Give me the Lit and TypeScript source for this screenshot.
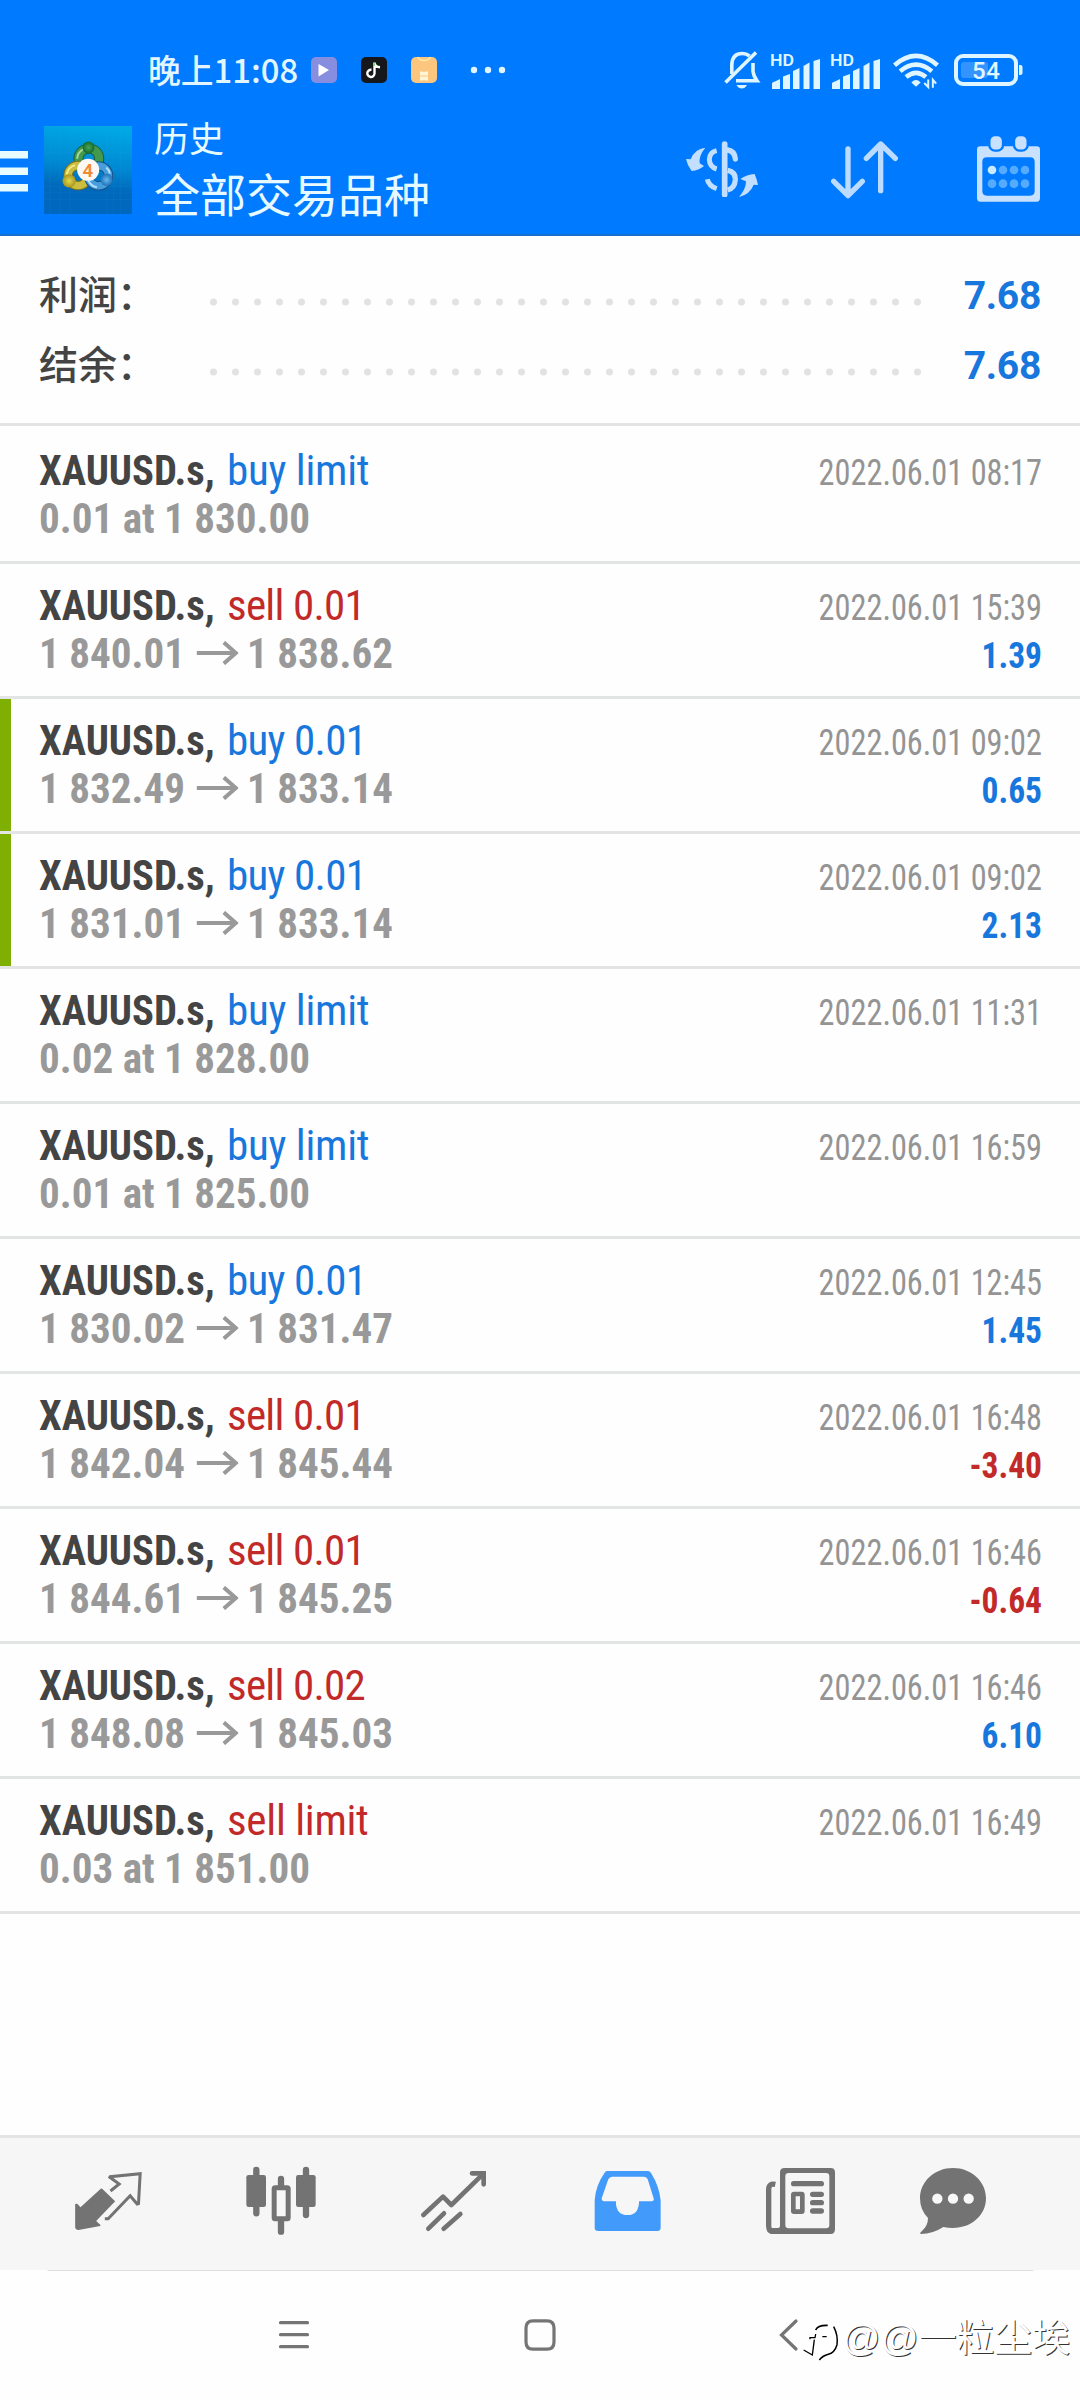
import { LitElement, html, svg, css } from "lit";
import { customElement, property } from "lit/decorators.js";
import { classMap } from "lit/directives/class-map.js";

interface Deal {
  side: "buy" | "sell";
  volume: string;
  from: string;
  to?: string;
  time: string;
  profit?: string;
  closed?: boolean;
}

const DEALS: Deal[] = [
  { side: "buy", volume: "limit", from: "0.01 at 1 830.00", time: "2022.06.01 08:17" },
  { side: "sell", volume: "0.01", from: "1 840.01", to: "1 838.62", time: "2022.06.01 15:39", profit: "1.39" },
  { side: "buy", volume: "0.01", from: "1 832.49", to: "1 833.14", time: "2022.06.01 09:02", profit: "0.65", closed: true },
  { side: "buy", volume: "0.01", from: "1 831.01", to: "1 833.14", time: "2022.06.01 09:02", profit: "2.13", closed: true },
  { side: "buy", volume: "limit", from: "0.02 at 1 828.00", time: "2022.06.01 11:31" },
  { side: "buy", volume: "limit", from: "0.01 at 1 825.00", time: "2022.06.01 16:59" },
  { side: "buy", volume: "0.01", from: "1 830.02", to: "1 831.47", time: "2022.06.01 12:45", profit: "1.45" },
  { side: "sell", volume: "0.01", from: "1 842.04", to: "1 845.44", time: "2022.06.01 16:48", profit: "-3.40" },
  { side: "sell", volume: "0.01", from: "1 844.61", to: "1 845.25", time: "2022.06.01 16:46", profit: "-0.64" },
  { side: "sell", volume: "0.02", from: "1 848.08", to: "1 845.03", time: "2022.06.01 16:46", profit: "6.10" },
  { side: "sell", volume: "limit", from: "0.03 at 1 851.00", time: "2022.06.01 16:49" },
];

@customElement("status-bar")
class StatusBar extends LitElement {
  static styles = css`
    :host { display: flex; align-items: center; height: 68px; padding: 36px 57px 0 148px; color: #e2f6ff; }
    svg { display: block; flex: none; overflow: visible; }
    .time { font: 500 32.800px/40px "Noto Sans CJK SC", sans-serif; width: 163px; white-space: nowrap; margin-top: -2px; }
    .apps { display: flex; gap: 24px; }
    .dots { margin-left: 33px; }
    .right { display: flex; align-items: center; margin-left: auto; }
    .sig { margin-left: 10px; }
    .wifi { margin-left: 12px; }
    .bat { margin-left: 14px; }
    text { font-family: "Roboto", sans-serif; }
  `;

  private signal() {
    return svg`
      <text x="0" y="14" font-size="17" font-weight="600" fill="#dff5ff" textLength="24" lengthAdjust="spacingAndGlyphs">HD</text>
      <g fill="#dff5ff">
        <path d="M2 37 V31.5 Q2 30 5 29.5 L10 27 V37 Z"/>
        <path d="M13 37 V24.5 L20 22 V37 Z"/>
        <path d="M23 37 V19 L29.5 16 V37 Z"/>
        <path d="M33.5 37 V14 L39.5 10.5 V37 Z"/>
        <path d="M43.5 37 V9 L50 7 V37 Z"/>
      </g>`;
  }

  render() {
    return html`
      <span class="time">晚上11:08</span>
      <div class="apps">
        <svg width="26" height="26" viewBox="0 0 26 26">
          <rect width="26" height="26" rx="5" fill="#878edf"/>
          <path d="M7.5 7 L18 13 L7.5 19.5 Z" fill="#fff"/>
        </svg>
        <svg width="26" height="26" viewBox="0 0 26 26">
          <rect width="26" height="26" rx="5" fill="#16171c"/>
          <path d="M13.5 5.5 V16.5 A3.6 3.6 0 1 1 10.5 12.8 M13.5 6 Q14.5 10 19 10.3" fill="none" stroke="#fff" stroke-width="2.4"/>
          <path d="M13.3 5.5 V9" stroke="#5fd05f" stroke-width="1"/>
        </svg>
        <svg width="26" height="26" viewBox="0 0 26 26">
          <rect width="26" height="26" rx="5" fill="#fcc67f"/>
          <path d="M7 0 Q8 3.5 13 3.5 Q18 3.5 19.5 0" fill="none" stroke="#ffe9a8" stroke-width="1.4"/>
          <path d="M9 14.5 h3 l1 1 l1 -1 h3 v4 h-8 Z M9 19.5 h8 v4 h-3 l-1 -1 l-1 1 h-3 Z" fill="#fff6d8"/>
        </svg>
      </div>
      <svg class="dots" width="36" height="8" viewBox="0 0 36 8" fill="#dff5ff">
        <circle cx="4" cy="4" r="3.2"/><circle cx="18" cy="4" r="3.2"/><circle cx="32" cy="4" r="3.2"/>
      </svg>
      <div class="right">
        <svg width="36" height="39" viewBox="0 0 36 39" fill="none" stroke="#dff5ff" stroke-width="3.6">
          <path d="M1.5 31.5 L32 1.5"/>
          <path d="M7.8 23 V14 Q8 2.500 18.500 2.500 Q22.500 2.500 25.500 5"/>
          <path d="M29 12 V20.500 Q29.500 25 33 29.800 H12"/>
          <path d="M12.500 34 H23 Q21 37.500 17.800 37.500 Q14.500 37.500 12.500 34 Z" fill="#dff5ff" stroke="none"/>
        </svg>
        <svg class="sig" width="50" height="37" viewBox="0 0 50 37">${this.signal()}</svg>
        <svg class="sig" width="50" height="37" viewBox="0 0 50 37">${this.signal()}</svg>
        <svg class="wifi" width="48" height="37" viewBox="696 66 144 112" fill="none" stroke="#dff5ff" stroke-width="14">
          <path d="M703 106 Q768 50 833 106"/>
          <path d="M720 124 Q768 84 816 124"/>
          <path d="M738 142 Q768 116 798 142"/>
          <path d="M754 158 Q768 144 782 158 L768 171 Z" fill="#dff5ff" stroke="none"/>
          <path d="M793 160 L805 172 V149 M829 162 L819 150 V174" stroke-width="6"/>
        </svg>
        <svg class="bat" width="69" height="32" viewBox="0 0 69 32">
          <rect x="2" y="2" width="60" height="28" rx="7" fill="none" stroke="#dff5ff" stroke-width="4"/>
          <path d="M65 11 h1.500 a2 2 0 0 1 2 2 v6 a2 2 0 0 1 -2 2 h-1.500 Z" fill="#dff5ff"/>
          <rect x="7" y="8" width="27" height="16" rx="3" fill="#3394ff"/>
          <text x="18" y="24.500" font-size="24" font-weight="500" fill="#e2f6ff" textLength="28">54</text>
        </svg>
      </div>
    `;
  }
}

@customElement("title-bar")
class TitleBar extends LitElement {
  static styles = css`
    :host { display: flex; align-items: center; height: 130px; padding-right: 40px; }
    svg { display: block; flex: none; }
    .menu { margin-top: 6px; }
    .logo { margin: 2px 0 0 16px; }
    .titles { display: flex; flex-direction: column; margin: 0 0 0 22px; font-family: "Noto Sans CJK SC", sans-serif; color: #e6faff; white-space: nowrap; }
    .small { font-size: 35px; line-height: 40px; }
    .large { font-size: 46px; line-height: 60px; margin-top: 5px; }
    .actions { display: flex; align-items: center; margin-left: auto; }
    .sort { margin: 2px 79px 0 73px; }
    .badge { font-family: "Roboto", sans-serif; }
  `;

  render() {
    return html`
      <svg class="menu" width="28" height="42" viewBox="0 0 28 42" fill="#e8fbff">
        <rect width="28" height="7.500"/><rect y="16.500" width="28" height="7.500"/><rect y="33" width="28" height="7.500"/>
      </svg>
      <svg class="logo" width="88" height="88" viewBox="42 50 263 263">
        <defs>
          <linearGradient id="sky" x1="0.5" y1="0" x2="0.400" y2="1">
            <stop offset="0" stop-color="#00a8e4"/><stop offset="0.450" stop-color="#0088d2"/><stop offset="0.700" stop-color="#0069bb"/><stop offset="1" stop-color="#0067c0"/>
          </linearGradient>
          <radialGradient id="g"><stop offset="0" stop-color="#4aa556"/><stop offset="1" stop-color="#156a30"/></radialGradient>
          <radialGradient id="y"><stop offset="0" stop-color="#e4d850"/><stop offset="1" stop-color="#a5961c"/></radialGradient>
          <radialGradient id="b"><stop offset="0" stop-color="#64b9ef"/><stop offset="1" stop-color="#2273b8"/></radialGradient>
        </defs>
        <rect x="42" y="50" width="263" height="263" fill="url(#sky)"/>
        <path d="M60 50V313M90 50V313M120 50V313M230 50V313M250 50V313M270 50V313M42 230H305M42 250H305M42 270H305M42 130H305" stroke="#3fb2ea" stroke-width="1" opacity=".25"/>
        <circle cx="176" cy="148" r="31" fill="none" stroke="#1d5f37" stroke-width="30"/>
        <circle cx="176" cy="148" r="31" fill="none" stroke="#439a4e" stroke-width="24"/>
        <path d="M141 148 A35 35 0 0 1 160 119" fill="none" stroke="#a8d89a" stroke-width="6"/>
        <circle cx="144" cy="198" r="30" fill="none" stroke="#77701f" stroke-width="28"/>
        <circle cx="144" cy="198" r="30" fill="none" stroke="#cbbd3e" stroke-width="22"/>
        <path d="M110 195 A34 34 0 0 1 135 167" fill="none" stroke="#f1e98a" stroke-width="6"/>
        <circle cx="205" cy="199" r="30" fill="none" stroke="#174f84" stroke-width="28"/>
        <circle cx="205" cy="199" r="30" fill="none" stroke="#469fdc" stroke-width="22"/>
        <path d="M174 212 A34 34 0 0 0 200 233 M228 174 A34 34 0 0 1 239 192" fill="none" stroke="#b5e0fa" stroke-width="6"/>
        <circle cx="175" cy="114" r="18" fill="url(#g)"/>
        <circle cx="117" cy="214" r="20" fill="url(#y)"/>
        <circle cx="229" cy="211" r="18" fill="url(#b)"/>
        <circle cx="174" cy="181" r="33" fill="#fdf8f4"/>
        <text class="badge" x="173" y="201" font-size="56" font-weight="600" text-anchor="middle" fill="#f08a35">4</text>
      </svg>
      <div class="titles">
        <span class="small">历史</span>
        <span class="large">全部交易品种</span>
      </div>
      <div class="actions">
        <svg width="72" height="56" viewBox="78 330 216 168" fill="none" stroke="#c3dfff">
          <path d="M194 339 V491" stroke-width="17" stroke-linecap="round"/>
          <path d="M170 359 Q148 364 148 386 Q149 408 170 414" stroke-width="15"/>
          <path d="M203 357 Q224 360 226 384" stroke-width="16" stroke-linecap="round"/>
          <path d="M203 418 Q227 423 226 446 Q224 472 203 477" stroke-width="16"/>
          <path d="M142 445 Q146 465 170 473" stroke-width="15" stroke-linecap="butt"/>
          <path d="M136 350 Q103 354 92 385 L78 384 Q82 404 95 420 Q116 418 132 405 L119 397 Q116 374 136 350 Z" fill="#c3dfff" stroke="none"/>
          <path d="M237 498 Q270 490 281 461 L294 462 Q291 446 284 429 Q260 431 241 444 L258 451 Q259 472 237 498 Z" fill="#c3dfff" stroke="none"/>
        </svg>
        <svg class="sort" width="67" height="58" viewBox="515 332 201 174" fill="none" stroke="#bcdcff" stroke-width="16" stroke-linecap="round" stroke-linejoin="round">
          <path d="M566 356 V494 M523 453 L566 496 L609 453"/>
          <path d="M664 481 V342 M621 384 L664 341 L708 384"/>
        </svg>
        <svg width="63" height="66" viewBox="951 317 189 198">
          <path fill-rule="evenodd" fill="#c8e1ff" d="M961 348 H1130 Q1140 348 1140 358 V503 Q1140 514 1130 514 H961 Q951 514 951 503 V358 Q951 348 961 348 Z M981 381 Q967 381 967 394 V482 Q967 496 981 496 H1110 Q1124 496 1124 482 V394 Q1124 381 1110 381 Z"/>
          <g fill="#c8e1ff" stroke="#007aff" stroke-width="7">
            <rect x="988" y="314" width="41" height="47" rx="17"/><rect x="1062" y="314" width="41" height="47" rx="17"/>
          </g>
          <circle cx="996" cy="419" r="13" fill="#c8ebff"/>
          <g fill="#55acff">
            <circle cx="1029" cy="419" r="13"/><circle cx="1062" cy="419" r="13"/><circle cx="1095" cy="419" r="13"/>
            <circle cx="996" cy="460" r="13"/><circle cx="1029" cy="460" r="13"/><circle cx="1062" cy="460" r="13"/><circle cx="1095" cy="460" r="13"/>
          </g>
        </svg>
      </div>
    `;
  }
}

@customElement("deal-row")
class DealRow extends LitElement {
  @property({ attribute: false }) deal!: Deal;

  static styles = css`
    :host { display: block; font-family: "Roboto Condensed", sans-serif; white-space: nowrap; }
    .row { box-sizing: border-box; display: flex; height: 135px; padding-right: 38px; border-bottom: 3px solid #e3e4e4; }
    .mark { width: 11px; flex: none; }
    .closed .mark { background: #7faf03; }
    .body { flex: 1; padding: 17px 0 0 28px; }
    .line { display: flex; align-items: baseline; justify-content: space-between; height: 48px; line-height: 48px; font-size: 43px; }
    .symbol { display: inline-block; width: 188px; font-weight: 700; color: #444; transform: scaleX(0.945); transform-origin: 0 50%; }
    .side { letter-spacing: -0.250px; }
    .sized { letter-spacing: -0.700px; }
    .buy { color: #1777dc; }
    .sell { color: #c22a2a; }
    .price { font-weight: 700; color: #999; transform: scaleX(0.955); transform-origin: 0 50%; }
    .price svg { margin: 0 9px 3px 12px; }
    .time { font-size: 36.300px; color: #949494; transform: scaleX(0.89); transform-origin: 100% 50%; }
    .profit { font-size: 36px; font-weight: 700; transform: scaleX(0.93); transform-origin: 100% 50%; }
  `;

  render() {
    const d = this.deal;
    const loss = d.profit?.startsWith("-") ?? false;
    const side = classMap({ side: true, [d.side]: true, sized: d.volume !== "limit" });
    return html`<div class=${classMap({ row: true, closed: !!d.closed })}>
      <div class="mark"></div>
      <div class="body">
        <div class="line">
          <span><span class="symbol">XAUUSD.s,</span><span class=${side}>${d.side} ${d.volume}</span></span>
          <span class="time">${d.time}</span>
        </div>
        <div class="line">
          <span class="price">${d.from}${d.to
            ? html`<svg width="44" height="24" viewBox="0 0 44 24" fill="none" stroke="#999" stroke-width="4.200"><path d="M0 12 H41 M28.500 1.500 L41 12 L28.500 22.500"/></svg>${d.to}`
            : ""}</span>
          ${d.profit ? html`<span class="profit ${loss ? "sell" : "buy"}">${d.profit}</span>` : ""}
        </div>
      </div>
    </div>`;
  }
}

@customElement("tab-bar")
class TabBar extends LitElement {
  static styles = css`
    :host { display: flex; align-items: center; box-sizing: border-box; height: 135px; border-top: 3px solid #e3e4e4; background: #f6f6f6; padding: 0 0 6px 75px; }
    svg { display: block; flex: none; overflow: visible; }
    .chart { margin: 0 108px 0 105px; }
    .quotes { margin-left: 104px; }
    .news { margin: 0 85px 0 105px; }
  `;

  render() {
    return html`
      <svg width="67" height="58" viewBox="46 55 200 174" fill="none" stroke="#737373">
        <path d="M127 105 L166 143 L109 202 L122 214 L121 217 L56 229 Q47 229 46 221 V151 L52 150 L62 161 L121 107 Q124 103 127 105 Z" fill="#737373" stroke="none"/>
        <path d="M152 112 L178 91 L150 71 L151 69 L241 60 L236 150 L232 151 L211 126 L145 195 H135" stroke-width="9"/>
      </svg>
      <svg class="quotes" width="70" height="68" viewBox="559 39 208 204" fill="#737373">
        <rect x="559" y="63" width="59" height="96" rx="7"/><rect x="708" y="63" width="59" height="96" rx="7"/>
        <path d="M589 48 V178 M738 48 V183 M663 75 V95 M663 200 V233" stroke="#737373" stroke-width="19" stroke-linecap="round"/>
        <rect x="642.500" y="101" width="42" height="93" rx="3" fill="#f6f6f6" stroke="#737373" stroke-width="15"/>
      </svg>
      <svg class="chart" width="65" height="60" viewBox="1085 48 195 180" fill="none" stroke="#737373" stroke-width="14" stroke-linecap="round" stroke-linejoin="round">
        <path d="M1092 180 L1151 125 L1176 150 L1270 58"/>
        <path d="M1238 55 H1273 V88" stroke-linejoin="miter"/>
        <path d="M1107 221 L1154 175 M1153 221 L1203 177"/>
      </svg>
      <svg width="67" height="60" viewBox="42 47 200 181">
        <path fill-rule="evenodd" fill="#429bfa" d="M80 47 H204 Q209 47 213 53 Q238 93 242 135 V218 Q242 228 232 228 H54 Q43 228 43 218 V135 Q46 90 73 52 Q76 47 80 47 Z M96 64 Q88 64 84 72 L64 130 Q63 137 70 138 H107 Q107 180 142 180 Q176 180 177 138 H216 Q223 137 221 130 L203 72 Q200 64 192 64 Z"/>
      </svg>
      <svg class="news" width="69" height="66" viewBox="560 39 207 198" fill="none" stroke="#737373">
        <path d="M588 88 Q568 84 568 104 V212 Q568 229 582 229" stroke-width="16"/>
        <path fill-rule="evenodd" stroke="none" fill="#737373" d="M616 39 H754 Q767 39 767 52 V223 Q767 237 754 237 H580 Q566 236 562 224 L576 219 H596 Q602 219 602 212 V52 Q602 39 616 39 Z M628 54 Q618 54 618 64 V210 Q618 220 628 220 H740 Q750 220 750 210 V64 Q750 54 740 54 Z"/>
        <path d="M643 86 H726 M700 118 H726 M700 143 H726 M700 168 H726" stroke-width="16" stroke-linecap="round"/>
        <rect x="642" y="117" width="27" height="53" rx="2" stroke-width="14"/>
      </svg>
      <svg width="66" height="66" viewBox="1020 39 198 198">
        <path fill="#737373" d="M1119 39 C1175 39 1218 80 1218 130 C1218 180 1175 219 1119 219 Q1104 219 1090 216 Q1060 236 1022 237 Q1018 234 1026 228 Q1044 212 1044 189 Q1020 165 1020 130 C1020 80 1063 39 1119 39 Z"/>
        <g fill="#f8f8f8"><circle cx="1072" cy="131" r="15.500"/><circle cx="1119" cy="131" r="15.500"/><circle cx="1166" cy="131" r="15.500"/></g>
      </svg>
    `;
  }
}

@customElement("app-root")
class AppRoot extends LitElement {
  static styles = css`
    :host { display: flex; flex-direction: column; position: relative; box-sizing: border-box; width: 1080px; height: 2400px; overflow: hidden; background: #fefefe; }
    .header { background: #007aff; border-bottom: 2px solid #1a6fce; flex: none; }
    .summary { box-sizing: border-box; height: 190px; padding: 21px 39px 0 39px; border-bottom: 3px solid #e3e4e4; flex: none; }
    .sum { display: flex; align-items: baseline; height: 70px; line-height: 70px; }
    .label { width: 171px; font-family: "Noto Sans CJK SC", sans-serif; font-weight: 500; font-size: 39px; color: #444; white-space: nowrap; }
    .sum svg { display: block; align-self: center; margin-top: 20px; }
    .value { margin-left: auto; font-family: "Roboto", sans-serif; font-weight: 700; font-size: 39px; letter-spacing: -0.300px; color: #1777dc; }
    .deals { flex: 1; padding-top: 3px; }
    tab-bar { flex: none; }
    .system { flex: none; height: 130px; display: flex; justify-content: center; }
    .system svg { display: block; }
    .watermark { position: absolute; left: 801px; top: 2308px; display: flex; align-items: center; height: 60px; gap: 2px; }
    .watermark svg { margin-top: 7px; }
    .watermark span { font: 37.800px/60px "Liberation Sans", "Noto Sans CJK SC", sans-serif; color: #fff; text-shadow: 1px 1px 0 #333; white-space: nowrap; }
  `;

  private summary(label: string, value: string) {
    return html`<div class="sum">
      <span class="label">${label}</span>
      <svg width="715" height="8" viewBox="0 0 715 8" fill="#e2e2e2">
        ${Array.from({ length: 33 }, (_, i) => svg`<circle cx=${3.5 + i * 22} cy="4" r="3.500"/>`)}
      </svg>
      <span class="value">${value}</span>
    </div>`;
  }

  render() {
    return html`
      <div class="header"><status-bar></status-bar><title-bar></title-bar></div>
      <div class="summary">${this.summary("利润：", "7.68")}${this.summary("结余：", "7.68")}</div>
      <div class="deals">${DEALS.map((d) => html`<deal-row .deal=${d}></deal-row>`)}</div>
      <tab-bar></tab-bar>
      <div class="system">
        <svg width="1080" height="130" viewBox="0 0 1080 130" fill="none" stroke="#757575" stroke-width="3.200" stroke-linecap="round">
          <path d="M48 0.500 H1033" stroke="#dedede" stroke-width="1"/>
          <path d="M280.500 52.700 H307.500 M280.500 64.700 H307.500 M280.500 76.700 H307.500"/>
          <path d="M533 50.800 H547 Q554 50.800 554 58 V72 Q554 79.200 547 79.200 H533 Q526 79.200 526 72 V58 Q526 50.800 533 50.800 Z"/>
          <path d="M796 51 L781.500 65 L796 79"/>
        </svg>
      </div>
      <div class="watermark">
        <svg width="39" height="44" viewBox="30 38 117 132">
          <path d="M75 46 Q90 38 125 46 Q143 70 141 100 Q138 130 115 140 Q100 146 84 160 L80 140 L64 148 L34 130 L50 90 L66 80 Z" fill="#fff"/>
          <path d="M74 68 Q80 53 110 54" fill="none" stroke="#000" stroke-width="5"/>
          <path d="M128 58 Q142 85 138 112 Q131 136 112 141 Q94 146 85 158" fill="none" stroke="#000" stroke-width="4.500"/>
          <path d="M57 96 V91 H72 L74 80 M94 88 H107 M70 97 L64 143 L38 128" fill="none" stroke="#000" stroke-width="4"/>
        </svg>
        <span>@@一粒尘埃</span>
      </div>
    `;
  }
}
